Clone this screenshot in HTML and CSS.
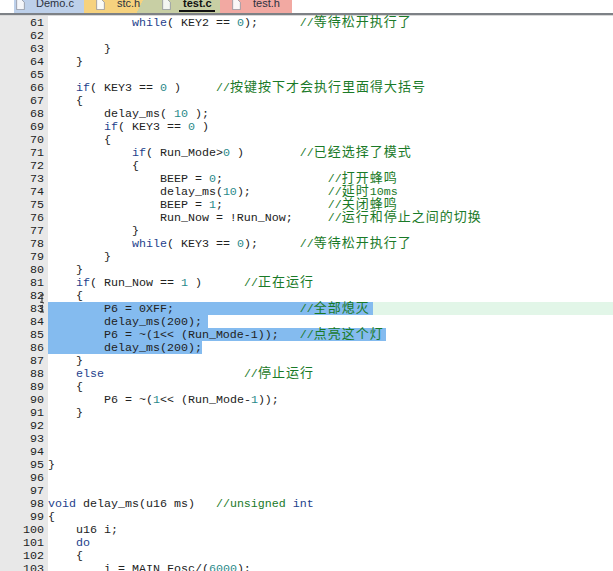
FILE: index.html
```html
<!DOCTYPE html>
<html lang="zh">
<head>
<meta charset="utf-8">
<title>test.c</title>
<link rel="stylesheet" href="styles.css">
</head>
<body>
<div class="tabs">
  <div class="tab tab-demo"><svg class="doc" viewBox="0 0 11 13"><path d="M.5 0V12.5H10.5V3L7.5 0" fill="#f4f6fa" stroke="#8a8f9a"/></svg><span>Demo.c</span></div>
  <div class="tab tab-stc"><svg class="doc" viewBox="0 0 11 13"><path d="M.5 0V12.5H10.5V3L7.5 0" fill="#fbfbf6" stroke="#8a8f9a"/></svg><span>stc.h</span></div>
  <div class="tab tab-test"><svg class="doc" viewBox="0 0 11 13"><path d="M.5 0V12.5H10.5V3L7.5 0" fill="#f4f6f2" stroke="#8a8f9a"/></svg><span class="active">test.c</span></div>
  <div class="tab tab-h"><svg class="doc" viewBox="0 0 11 13"><path d="M.5 0V12.5H10.5V3L7.5 0" fill="#fbf6f6" stroke="#8a8f9a"/></svg><span>test.h</span></div>
</div>
<div class="editor">
<div class="r"><span class="n">61</span><span class="c">            <b>while</b>( KEY2 == <i>0</i>);      <em>//<u>等待松开执行了</u></em></span></div>
<div class="r"><span class="n">62</span><span class="c"></span></div>
<div class="r"><span class="n">63</span><span class="c">        }</span></div>
<div class="r"><span class="n">64</span><span class="c">    }</span></div>
<div class="r"><span class="n">65</span><span class="c"></span></div>
<div class="r"><span class="n">66</span><span class="c">    <b>if</b>( KEY3 == <i>0</i> )     <em>//<u>按键按下才会执行里面得大括号</u></em></span></div>
<div class="r"><span class="n">67</span><span class="c">    {</span></div>
<div class="r"><span class="n">68</span><span class="c">        delay_ms( <i>10</i> );</span></div>
<div class="r"><span class="n">69</span><span class="c">        <b>if</b>( KEY3 == <i>0</i> )</span></div>
<div class="r"><span class="n">70</span><span class="c">        {</span></div>
<div class="r"><span class="n">71</span><span class="c">            <b>if</b>( Run_Mode&gt;<i>0</i> )        <em>//<u>已经选择了模式</u></em></span></div>
<div class="r"><span class="n">72</span><span class="c">            {</span></div>
<div class="r"><span class="n">73</span><span class="c">                BEEP = <i>0</i>;               <em>//<u>打开蜂鸣</u></em></span></div>
<div class="r"><span class="n">74</span><span class="c">                delay_ms(<i>10</i>);           <em>//<u>延时</u>10ms</em></span></div>
<div class="r"><span class="n">75</span><span class="c">                BEEP = <i>1</i>;               <em>//<u>关闭蜂鸣</u></em></span></div>
<div class="r"><span class="n">76</span><span class="c">                Run_Now = !Run_Now;     <em>//<u>运行和停止之间的切换</u></em></span></div>
<div class="r"><span class="n">77</span><span class="c">            }</span></div>
<div class="r"><span class="n">78</span><span class="c">            <b>while</b>( KEY3 == <i>0</i>);      <em>//<u>等待松开执行了</u></em></span></div>
<div class="r"><span class="n">79</span><span class="c">        }</span></div>
<div class="r"><span class="n">80</span><span class="c">    }</span></div>
<div class="r"><span class="n">81</span><span class="c">    <b>if</b>( Run_Now == <i>1</i> )      <em>//<u>正在运行</u></em></span></div>
<div class="r"><span class="n">82</span><span class="c">    {</span></div>
<div class="r cur"><span class="n">83</span><span class="c"><span class="sel sel-83">        P6 = 0XFF;                  <em>//<u>全部熄灭</u></em></span></span></div>
<div class="r"><span class="n">84</span><span class="c"><span class="sel sel-84">        delay_ms(200);</span></span></div>
<div class="r"><span class="n">85</span><span class="c"><span class="sel sel-85">        P6 = ~(1&lt;&lt; (Run_Mode-1));   <em>//<u>点亮这个灯</u></em></span></span></div>
<div class="r"><span class="n">86</span><span class="c"><span class="sel sel-86">        delay_ms(200);</span></span></div>
<div class="r"><span class="n">87</span><span class="c">    }</span></div>
<div class="r"><span class="n">88</span><span class="c">    <b>else</b>                    <em>//<u>停止运行</u></em></span></div>
<div class="r"><span class="n">89</span><span class="c">    {</span></div>
<div class="r"><span class="n">90</span><span class="c">        P6 = ~(<i>1</i>&lt;&lt; (Run_Mode-<i>1</i>));</span></div>
<div class="r"><span class="n">91</span><span class="c">    }</span></div>
<div class="r"><span class="n">92</span><span class="c"></span></div>
<div class="r"><span class="n">93</span><span class="c"></span></div>
<div class="r"><span class="n">94</span><span class="c"></span></div>
<div class="r"><span class="n">95</span><span class="c">}</span></div>
<div class="r"><span class="n">96</span><span class="c"></span></div>
<div class="r"><span class="n">97</span><span class="c"></span></div>
<div class="r"><span class="n">98</span><span class="c"><b>void</b> delay_ms(u16 ms)   <em>//unsigned</em> <b>int</b></span></div>
<div class="r"><span class="n">99</span><span class="c">{</span></div>
<div class="r"><span class="n">100</span><span class="c">    u16 i;</span></div>
<div class="r"><span class="n">101</span><span class="c">    <b>do</b></span></div>
<div class="r"><span class="n">102</span><span class="c">    {</span></div>
<div class="r"><span class="n">103</span><span class="c">        i = MAIN_Fosc/(<i>6000</i>);</span></div>
</div>
<svg class="mouse" viewBox="0 0 8 20"><path d="M2 1H6M4 1V8M2 8L6 9M5 11L2 13M4 13V18M2 18H6" fill="none" stroke="#222"/></svg>
</body>
</html>
```
FILE: styles.css
```css
* { box-sizing: border-box; }
html, body { margin: 0; padding: 0; }
body {
  position: relative;
  width: 613px;
  height: 571px;
  overflow: hidden;
  background: #fff;
  color: #222;
  font-family: "Liberation Mono", "Noto Sans CJK SC", monospace;
  font-size: 11.67px;
}
.tabs {
  display: flex;
  height: 16px;
  padding-left: 14px;
  background: linear-gradient(#fff 0, #fff 13px, #7d8186 13px, #7d8186 15px, #d8d8d8 15px);
  overflow: hidden;
}
.tab {
  display: flex;
  align-items: flex-start;
  gap: 11px;
  height: 13px;
  font-family: "Liberation Sans", sans-serif;
  font-size: 11px;
  line-height: 6px;
  color: #1c2a3a;
  flex: none;
}
.doc { width: 11px; height: 10px; flex: none; }
.tab-demo { width: 70px; padding-left: 1px; gap: 10px; background: #bdd0ea; }
.tab-stc { width: 64px; padding-left: 11px; background: linear-gradient(115deg, #f6d27e 84%, #c8cfa4 84%); }
.tab-test { width: 72px; padding-left: 13px; background: #c8cfa4; }
.tab-h { width: 72px; padding-left: 11px; background: #f2a9a2; }
.tab-demo span, .tab-stc span, .tab-h span { color: #2c3240; }
.active {
  font-weight: bold;
  height: 12px;
  margin-left: -4px;
  padding: 0 3px 0 4px;
  border-bottom: 2px solid #111;
  color: #111;
}
.editor { display: flex; flex-direction: column; }
.r { display: flex; height: 13px; line-height: 15px; flex: none; }
.cur { background: #e2f6e8; }
.n {
  flex: none;
  width: 48px;
  height: 13px;
  padding-right: 4px;
  background: #e8e8e8;
  text-align: right;
  color: #222;
}
.c { white-space: pre; height: 13px; }
.c b { font-weight: normal; color: #1e3f8c; }
.c i { font-style: normal; color: #2a8a8a; }
.c em { font-style: normal; color: #1a7a28; }
.c u {
  text-decoration: none;
  font-size: 13px;
  letter-spacing: 1px;
  line-height: 0;
  font-family: "Noto Sans CJK SC", sans-serif;
}
.sel { display: inline-block; height: 13px; background: #84bbef; vertical-align: top; }
.sel-83 { width: 325px; }
.sel-84 { width: 160px; }
.sel-85 { width: 338px; }
.sel-86 { width: 154px; }
.mouse { position: absolute; left: 38px; top: 294px; width: 8px; height: 20px; }
```
